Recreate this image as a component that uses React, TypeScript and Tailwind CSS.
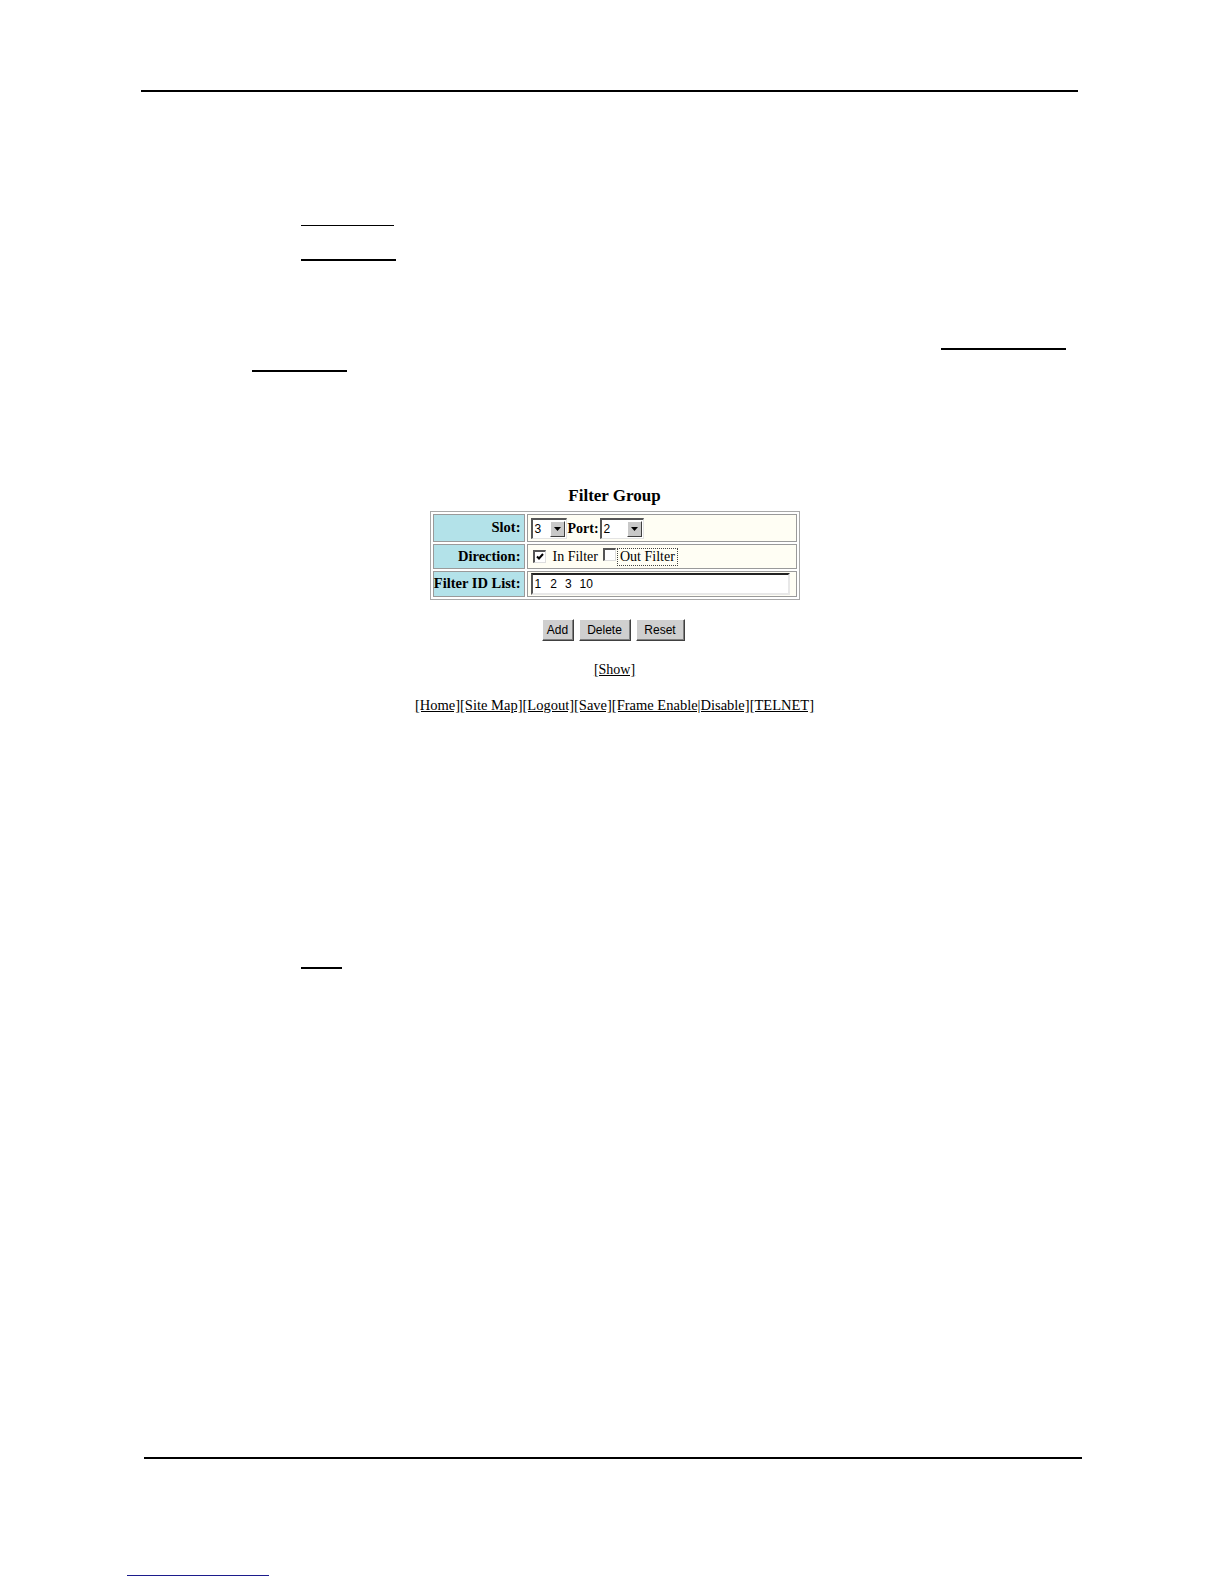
import React from 'react';

const serif = { fontFamily: '"Liberation Serif", "Times New Roman", serif' };
const sans = { fontFamily: '"Liberation Sans", Arial, sans-serif' };

function Rule({ className }: { className: string }) {
  return <div className={className} />;
}

function Select({ value, width }: { value: string; width: string }) {
  return (
    <div
      className={`flex h-[21px] ${width} items-stretch border-t-2 border-l-2 border-t-[#555] border-l-[#555] border-b border-r border-b-[#e4e4e4] border-r-[#e4e4e4] bg-white`}
    >
      <span className="flex-1 pl-[2px] text-[12px] leading-[18px] text-black" style={sans}>
        {value}
      </span>
      <span className="m-px flex w-[15px] items-center justify-center border border-t-white border-l-white border-b-[#404040] border-r-[#404040] bg-[#c8c8c8]">
        <svg width="7" height="4" viewBox="0 0 7 4">
          <path d="M0 0h7L3.5 4z" fill="#000" />
        </svg>
      </span>
    </div>
  );
}

function Checkbox({ checked }: { checked?: boolean }) {
  return (
    <span className="inline-flex h-[13px] w-[13px] items-center justify-center border-t-2 border-l-2 border-t-[#555] border-l-[#555] border-b border-r border-b-[#ddd] border-r-[#ddd] bg-white">
      {checked && (
        <svg width="8" height="8" viewBox="0 0 8 8">
          <path d="M1 3.5l2 2 4-4.5" stroke="#000" strokeWidth="2" fill="none" />
        </svg>
      )}
    </span>
  );
}

function Button({ label, width }: { label: string; width: string }) {
  return (
    <button
      className={`h-[22px] ${width} border border-t-white border-l-white border-b-[#404040] border-r-[#404040] bg-[#cfcfcf] text-[12px] text-black shadow-[inset_-1px_-1px_0_#808080]`}
      style={sans}
    >
      {label}
    </button>
  );
}

function FilterGroupForm() {
  const labelCell = 'w-[92px] border border-[#9a9a9a] bg-[#b3e2e9] pr-[3px] text-right text-[14.5px] font-bold text-black';
  const valueCell = 'w-[270px] border border-[#9a9a9a] bg-[#fffef4] pl-[3px] text-[14px] text-black';
  return (
    <div className="flex flex-col items-center pl-[5px]" style={serif}>
      <h2 className="text-[17px] font-bold leading-[20px] text-black">Filter Group</h2>
      <table className="mt-[5px] border-separate border-spacing-[2px] border border-[#a8a8a8]">
        <tbody>
          <tr className="h-[28px]">
            <td className={labelCell}>Slot:</td>
            <td className={valueCell}>
              <div className="flex items-center gap-[1px]">
                <Select value="3" width="w-[36px]" />
                <span className="font-bold">Port:</span>
                <Select value="2" width="w-[44px]" />
              </div>
            </td>
          </tr>
          <tr className="h-[25px]">
            <td className={labelCell}>Direction:</td>
            <td className={valueCell}>
              <div className="flex items-center">
                <span className="ml-[2px]">
                  <Checkbox checked />
                </span>
                <span className="ml-[7px]">In Filter</span>
                <span className="ml-[5px]">
                  <Checkbox />
                </span>
                <span className="ml-[1px] border border-dotted border-[#444] px-[2px] leading-[16px]">Out Filter</span>
              </div>
            </td>
          </tr>
          <tr className="h-[26px]">
            <td className={labelCell}>Filter ID List:</td>
            <td className={valueCell}>
              <div
                className="flex h-[22px] w-[259px] items-center border-t-2 border-l-2 border-t-[#222] border-l-[#555] border-b-2 border-r-2 border-b-[#e8e8e8] border-r-[#e8e8e8] bg-white pl-[2px] text-[12px] text-black"
                style={sans}
              >
                <span>1</span>
                <span className="ml-[9px]">2</span>
                <span className="ml-[8px]">3</span>
                <span className="ml-[8px]">10</span>
              </div>
            </td>
          </tr>
        </tbody>
      </table>
      <div className="mt-[19px] flex gap-[5px] pr-[3px]">
        <Button label="Add" width="w-[32px]" />
        <Button label="Delete" width="w-[52px]" />
        <Button label="Reset" width="w-[49px]" />
      </div>
      <a className="mt-[20px] text-[14px] leading-[17px] text-black underline">[Show]</a>
      <a className="mt-[19px] text-[14.5px] leading-[17px] text-black underline">
        [Home][Site Map][Logout][Save][Frame Enable|Disable][TELNET]
      </a>
    </div>
  );
}

export default function App() {
  return (
    <div className="h-[1584px] w-[1224px] bg-white pt-[90px]">
      <Rule className="ml-[141px] h-[2px] w-[937px] bg-black" />
      <Rule className="ml-[301px] mt-[133px] h-px w-[93px] bg-black" />
      <Rule className="ml-[301px] mt-[33px] h-[2px] w-[95px] bg-black" />
      <Rule className="ml-[941px] mt-[87px] h-[2px] w-[125px] bg-black" />
      <Rule className="ml-[252px] mt-[20px] h-[2px] w-[95px] bg-black" />
      <div className="mt-[114px]">
        <FilterGroupForm />
      </div>
      <Rule className="ml-[301px] mt-[253px] h-[2px] w-[41px] bg-black" />
      <Rule className="ml-[144px] mt-[488px] h-[2px] w-[938px] bg-black" />
      <Rule className="ml-[127px] mt-[116px] h-px w-[142px] bg-[#1c1c8c]" />
    </div>
  );
}
